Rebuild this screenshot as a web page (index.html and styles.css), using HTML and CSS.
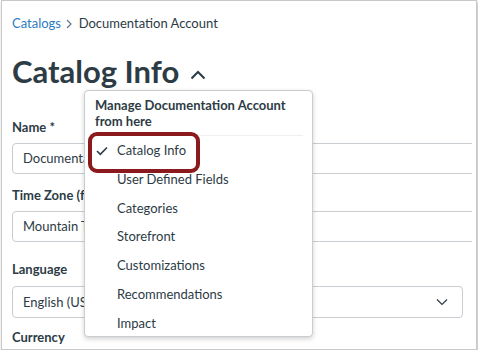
FILE: index.html
```html
<!DOCTYPE html>
<html lang="en">
<head>
    <meta charset="UTF-8">
    <title>Catalog Info</title>
    <link rel="stylesheet" href="styles.css">
</head>
<body>
    <div class="frame">
        <nav class="crumbs">
            <a href="#">Catalogs</a>
            <svg class="sep" width="6" height="10" viewBox="0 0 6 10" fill="none">
                <path d="M1 1L5 5L1 9" stroke="#6b7780" stroke-width="1.2"/>
            </svg>
            <span>Documentation Account</span>
        </nav>

        <h1 class="title">Catalog Info
            <svg class="caret" width="16" height="10" viewBox="0 0 16 10" fill="none">
                <path d="M1.5 8.5L8 2L14.5 8.5" stroke="#2d3b45" stroke-width="2"/>
            </svg>
        </h1>

        <div class="form">
            <label class="label name-label">Name *</label>
            <div class="field wide">Documentation Account</div>

            <label class="label tz-label">Time Zone (for this catalog)</label>
            <div class="field wide">Mountain Time (US &amp; Canada)</div>

            <label class="label lang-label">Language</label>
            <div class="field select">
                <span>English (US)</span>
                <svg width="12" height="8" viewBox="0 0 12 8" fill="none">
                    <path d="M1 1.5L6 6.5L11 1.5" stroke="#2d3b45" stroke-width="1.2"/>
                </svg>
            </div>

            <label class="label cur-label">Currency</label>
        </div>

        <!-- dropdown opened from the title caret -->
        <div class="menu">
            <div class="menu-head">Manage Documentation Account from here</div>
            <ul class="menu-list">
                <li class="active">
                    <svg class="check" width="12" height="10" viewBox="0 0 12 10" fill="none">
                        <path d="M1 5L4.3 8.3L11 1.5" stroke="#2d3b45" stroke-width="1.6"/>
                    </svg>
                    Catalog Info
                </li>
                <li>User Defined Fields</li>
                <li>Categories</li>
                <li>Storefront</li>
                <li>Customizations</li>
                <li>Recommendations</li>
                <li>Impact</li>
            </ul>
        </div>

        <div class="highlight"></div>
    </div>
</body>
</html>
```

FILE: styles.css
```css
body {
    margin: 0;
    background-color: #fff;
    font-family: Lato, 'Noto Sans', sans-serif;
    color: #2d3b45;
}
.frame {
    position: relative;
    margin-left: 1px;
    width: 464px;
    height: 348px;
    border: 1px solid #c9c9c9;
    box-shadow: 1px 2px 3px rgba(0, 0, 0, 0.3);
    padding-left: 10px;
    overflow: hidden;
}
.crumbs {
    padding-top: 12px;
    font-size: 13px;
    line-height: 20px;
}
.crumbs a {
    color: #2b7bc0;
    text-decoration: none;
}
.crumbs .sep {
    margin: 0 3px 0 2px;
    vertical-align: -1px;
}
.title {
    margin: 20px 0 0;
    font-size: 31px;
    font-weight: 700;
    line-height: 36px;
    color: #2d3b45;
}
.caret {
    margin-left: 3px;
    vertical-align: 3px;
}
.form {
    margin-right: 4px;
    overflow: hidden;
}
.label {
    display: block;
    font-size: 13px;
    font-weight: 700;
    line-height: 20px;
}
.name-label {
    margin-top: 28px;
}
.tz-label {
    margin-top: 11px;
}
.lang-label {
    margin-top: 17px;
}
.cur-label {
    margin-top: 9px;
}
.field {
    margin-top: 6px;
    height: 31px;
    border: 1px solid #c7cdd1;
    border-radius: 4px;
    padding: 0 10px;
    font-size: 13px;
    line-height: 29px;
    box-sizing: border-box;
    white-space: nowrap;
}
.wide {
    width: 500px;
}
.select {
    margin-top: 7px;
    width: 451px;
    height: 32px;
    line-height: 30px;
    display: flex;
    justify-content: space-between;
    align-items: center;
}
.select svg {
    margin-right: 4px;
}
.menu {
    position: absolute;
    left: 82px;
    top: 89px;
    width: 227px;
    height: 245px;
    background-color: #fff;
    border: 1px solid #c7cdd1;
    border-radius: 4px;
    box-shadow: 0 2px 5px rgba(0, 0, 0, 0.18);
}
.menu-head {
    margin: 0 9px;
    padding: 6px 1px 6px;
    font-size: 13px;
    font-weight: 700;
    line-height: 16px;
    border-bottom: 1px solid #f0f0f0;
}
.menu-list {
    list-style: none;
    margin: 0;
    padding: 0;
}
.menu-list li {
    position: relative;
    padding: 6px 0 6px 32px;
    font-size: 13px;
    line-height: 16.8px;
}
.check {
    position: absolute;
    left: 11px;
    top: 10px;
}
.highlight {
    position: absolute;
    left: 86px;
    top: 131px;
    width: 104px;
    height: 33px;
    border: 4px solid #8b1a1e;
    border-radius: 9px;
}
```
